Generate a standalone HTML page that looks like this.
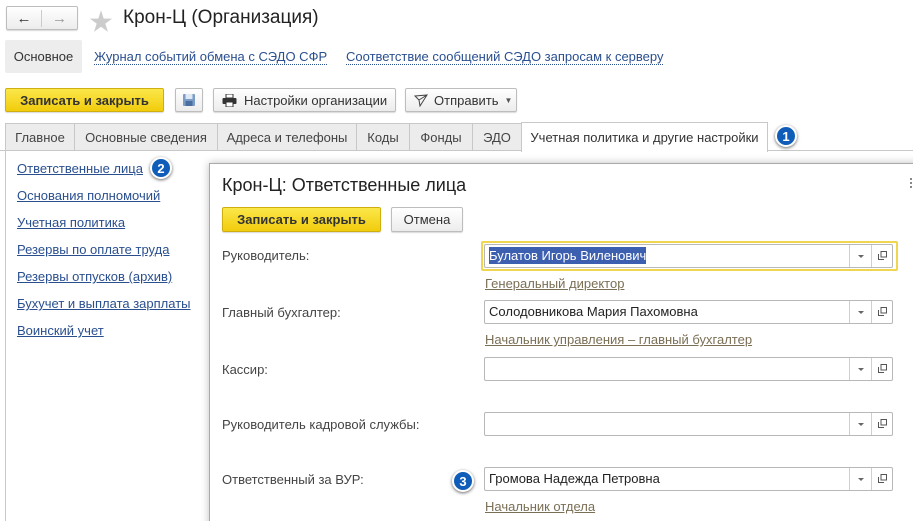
<!DOCTYPE html>
<html style="width:913px;height:521px;overflow:hidden"><head><meta charset="utf-8"><style>
*{box-sizing:border-box;margin:0;padding:0}
body{width:913px;height:521px;overflow:hidden;background:#fff;font-family:"Liberation Sans","Noto Sans CJK SC",sans-serif;font-size:13px;color:#333;position:relative}
.a{position:absolute;white-space:nowrap}
.btn{position:absolute;border:1px solid #bdbdbd;border-radius:2px;background:linear-gradient(#fff,#ececec);box-shadow:0 1px 1px rgba(0,0,0,.15);display:flex;align-items:center;justify-content:center;color:#333;font-size:13px}
.y{background:linear-gradient(#fbe74a,#f2cc0c);border-color:#cfae10;font-weight:bold;color:#333}
.tab{position:absolute;top:123px;height:27px;border:1px solid #c8c8c8;border-bottom:none;background:#ececec;display:flex;align-items:center;justify-content:center;color:#444;font-size:13px}
.lnk{position:absolute;left:17px;color:#2a4f8f;text-decoration:underline;font-size:13px}
.badge{position:absolute;width:22px;height:22px;border-radius:50%;background:#0f5db8;border:2px solid #fff;box-shadow:0 1px 3px rgba(0,0,0,.6);color:#fff;font-size:13px;display:flex;align-items:center;justify-content:center;font-weight:bold}
.lab{position:absolute;left:222px;color:#444;font-size:13px}
.inp{position:absolute;left:484px;width:409px;height:24px;border:1px solid #b8b8b8;border-radius:2px;background:#fff;font-size:13px;color:#222;padding-left:4px;line-height:22px}
.inp .d1{position:absolute;right:42px;top:0;bottom:0;border-left:1px solid #cfcfcf}
.inp .d2{position:absolute;right:20px;top:0;bottom:0;border-left:1px solid #cfcfcf}
.inp .ar{position:absolute;right:28px;top:10px;width:0;height:0;border-left:3px solid transparent;border-right:3px solid transparent;border-top:3px solid #666}
.inp .op{position:absolute;right:5px;top:6px;width:9px;height:9px}
.sub{position:absolute;left:485px;color:#7a6f55;text-decoration:underline;font-size:13px}
</style></head><body>
<div class="btn" style="left:6px;top:6px;width:72px;height:24px;padding:0">
<div style="width:36px;text-align:center;border-right:1px solid #ccc;font-size:15px;color:#333">&#8592;</div><div style="width:36px;text-align:center;font-size:15px;color:#999">&#8594;</div></div>
<div class="a" style="left:89px;top:2px;font-size:24px;color:#ccc">&#9733;</div>
<div class="a" style="left:123px;top:7px;font-size:19px;color:#222">Крон-Ц (Организация)</div>
<div class="a" style="left:5px;top:40px;width:77px;height:33px;background:#ededed;border-radius:2px;display:flex;align-items:center;justify-content:center;color:#333">Основное</div>
<div class="a" style="left:94px;top:50px;color:#2a4f8f;border-bottom:1px dotted #2a4f8f;line-height:14px">Журнал событий обмена с СЭДО СФР</div>
<div class="a" style="left:346px;top:50px;color:#2a4f8f;border-bottom:1px dotted #2a4f8f;line-height:14px">Соответствие сообщений СЭДО запросам к серверу</div>
<div class="btn y" style="left:5px;top:88px;width:159px;height:24px">Записать и закрыть</div>
<div class="btn" style="left:175px;top:88px;width:28px;height:24px"><svg width="14" height="14" viewBox="0 0 14 14"><rect x="1" y="1" width="12" height="12" rx="1" fill="#7a9cc6"/><rect x="3.5" y="1" width="7" height="5" fill="#dfe8f3"/><rect x="3.5" y="8" width="7" height="5" fill="#4a6f9e"/></svg></div>
<div class="btn" style="left:213px;top:88px;width:183px;height:24px;justify-content:flex-start;padding-left:8px"><svg width="15" height="13" viewBox="0 0 15 13" style="margin-right:7px"><rect x="4" y="0" width="7" height="4" fill="#fff" stroke="#333"/><rect x="0.5" y="4" width="14" height="6" rx="1" fill="#333"/><rect x="4" y="8" width="7" height="5" fill="#fff" stroke="#333"/></svg>Настройки организации</div>
<div class="btn" style="left:405px;top:88px;width:112px;height:24px;justify-content:flex-start;padding-left:8px"><svg width="14" height="13" viewBox="0 0 14 13" style="margin-right:6px"><path d="M1 2 L13 1 L6 12 L5 6 Z M5 6 L13 1" fill="none" stroke="#444" stroke-width="1"/></svg>Отправить <span style="font-size:8px;margin-left:6px;color:#555">&#9660;</span></div>
<div style="position:absolute;left:0;top:150px;width:913px;border-top:1px solid #c8c8c8"></div>
<div class="tab" style="left:5px;width:70px">Главное</div>
<div class="tab" style="left:74px;width:144px">Основные сведения</div>
<div class="tab" style="left:217px;width:140px">Адреса и телефоны</div>
<div class="tab" style="left:356px;width:54px">Коды</div>
<div class="tab" style="left:409px;width:64px">Фонды</div>
<div class="tab" style="left:472px;width:50px">ЭДО</div>
<div class="tab" style="left:521px;width:247px;top:122px;height:30px;background:#fff;color:#333">Учетная политика и другие настройки</div>
<div class="badge" style="left:775px;top:125px">1</div>
<div style="position:absolute;left:5px;top:151px;height:370px;border-left:1px solid #c8c8c8"></div>
<div class="lnk" style="top:161px">Ответственные лица</div>
<div class="badge" style="left:150px;top:157px">2</div>
<div class="lnk" style="top:188px">Основания полномочий</div>
<div class="lnk" style="top:215px">Учетная политика</div>
<div class="lnk" style="top:242px">Резервы по оплате труда</div>
<div class="lnk" style="top:269px">Резервы отпусков (архив)</div>
<div class="lnk" style="top:296px">Бухучет и выплата зарплаты</div>
<div class="lnk" style="top:323px">Воинский учет</div>
<div style="position:absolute;left:209px;top:163px;width:720px;height:370px;border:1px solid #aaa;background:#fff;box-shadow:0 0 8px rgba(0,0,0,.25)"></div>
<div class="a" style="left:910px;top:178px;width:2px;height:10px;border-left:2px dotted #888"></div>
<div class="a" style="left:222px;top:175px;font-size:18px;color:#222">Крон-Ц: Ответственные лица</div>
<div class="btn y" style="left:222px;top:207px;width:159px;height:25px">Записать и закрыть</div>
<div class="btn" style="left:391px;top:207px;width:72px;height:25px">Отмена</div>
<div class="lab" style="top:248px">Руководитель:</div>
<div class="a" style="left:481px;top:241px;width:417px;height:30px;border:2px solid #f0d64e;border-radius:2px"></div>
<div class="inp" style="top:244px"><span style="background:#3d5fb0;color:#fff;padding:1px 0">Булатов Игорь Виленович</span><div class="d1"></div><div class="d2"></div><div class="ar"></div><svg class="op" viewBox="0 0 9 9"><rect x="3" y="0.5" width="5.5" height="5.5" fill="none" stroke="#555"/><path d="M0.5 3v5.5h5.5" fill="none" stroke="#555"/></svg></div>
<div class="sub" style="top:276px">Генеральный директор</div>
<div class="lab" style="top:305px">Главный бухгалтер:</div>
<div class="inp" style="top:300px">Солодовникова Мария Пахомовна<div class="d1"></div><div class="d2"></div><div class="ar"></div><svg class="op" viewBox="0 0 9 9"><rect x="3" y="0.5" width="5.5" height="5.5" fill="none" stroke="#555"/><path d="M0.5 3v5.5h5.5" fill="none" stroke="#555"/></svg></div>
<div class="sub" style="top:332px">Начальник управления – главный бухгалтер</div>
<div class="lab" style="top:362px">Кассир:</div>
<div class="inp" style="top:357px"><div class="d1"></div><div class="d2"></div><div class="ar"></div><svg class="op" viewBox="0 0 9 9"><rect x="3" y="0.5" width="5.5" height="5.5" fill="none" stroke="#555"/><path d="M0.5 3v5.5h5.5" fill="none" stroke="#555"/></svg></div>
<div class="lab" style="top:417px">Руководитель кадровой службы:</div>
<div class="inp" style="top:412px"><div class="d1"></div><div class="d2"></div><div class="ar"></div><svg class="op" viewBox="0 0 9 9"><rect x="3" y="0.5" width="5.5" height="5.5" fill="none" stroke="#555"/><path d="M0.5 3v5.5h5.5" fill="none" stroke="#555"/></svg></div>
<div class="lab" style="top:472px">Ответственный за ВУР:</div>
<div class="badge" style="left:452px;top:470px">3</div>
<div class="inp" style="top:467px">Громова Надежда Петровна<div class="d1"></div><div class="d2"></div><div class="ar"></div><svg class="op" viewBox="0 0 9 9"><rect x="3" y="0.5" width="5.5" height="5.5" fill="none" stroke="#555"/><path d="M0.5 3v5.5h5.5" fill="none" stroke="#555"/></svg></div>
<div class="sub" style="top:499px">Начальник отдела</div>
</body></html>
